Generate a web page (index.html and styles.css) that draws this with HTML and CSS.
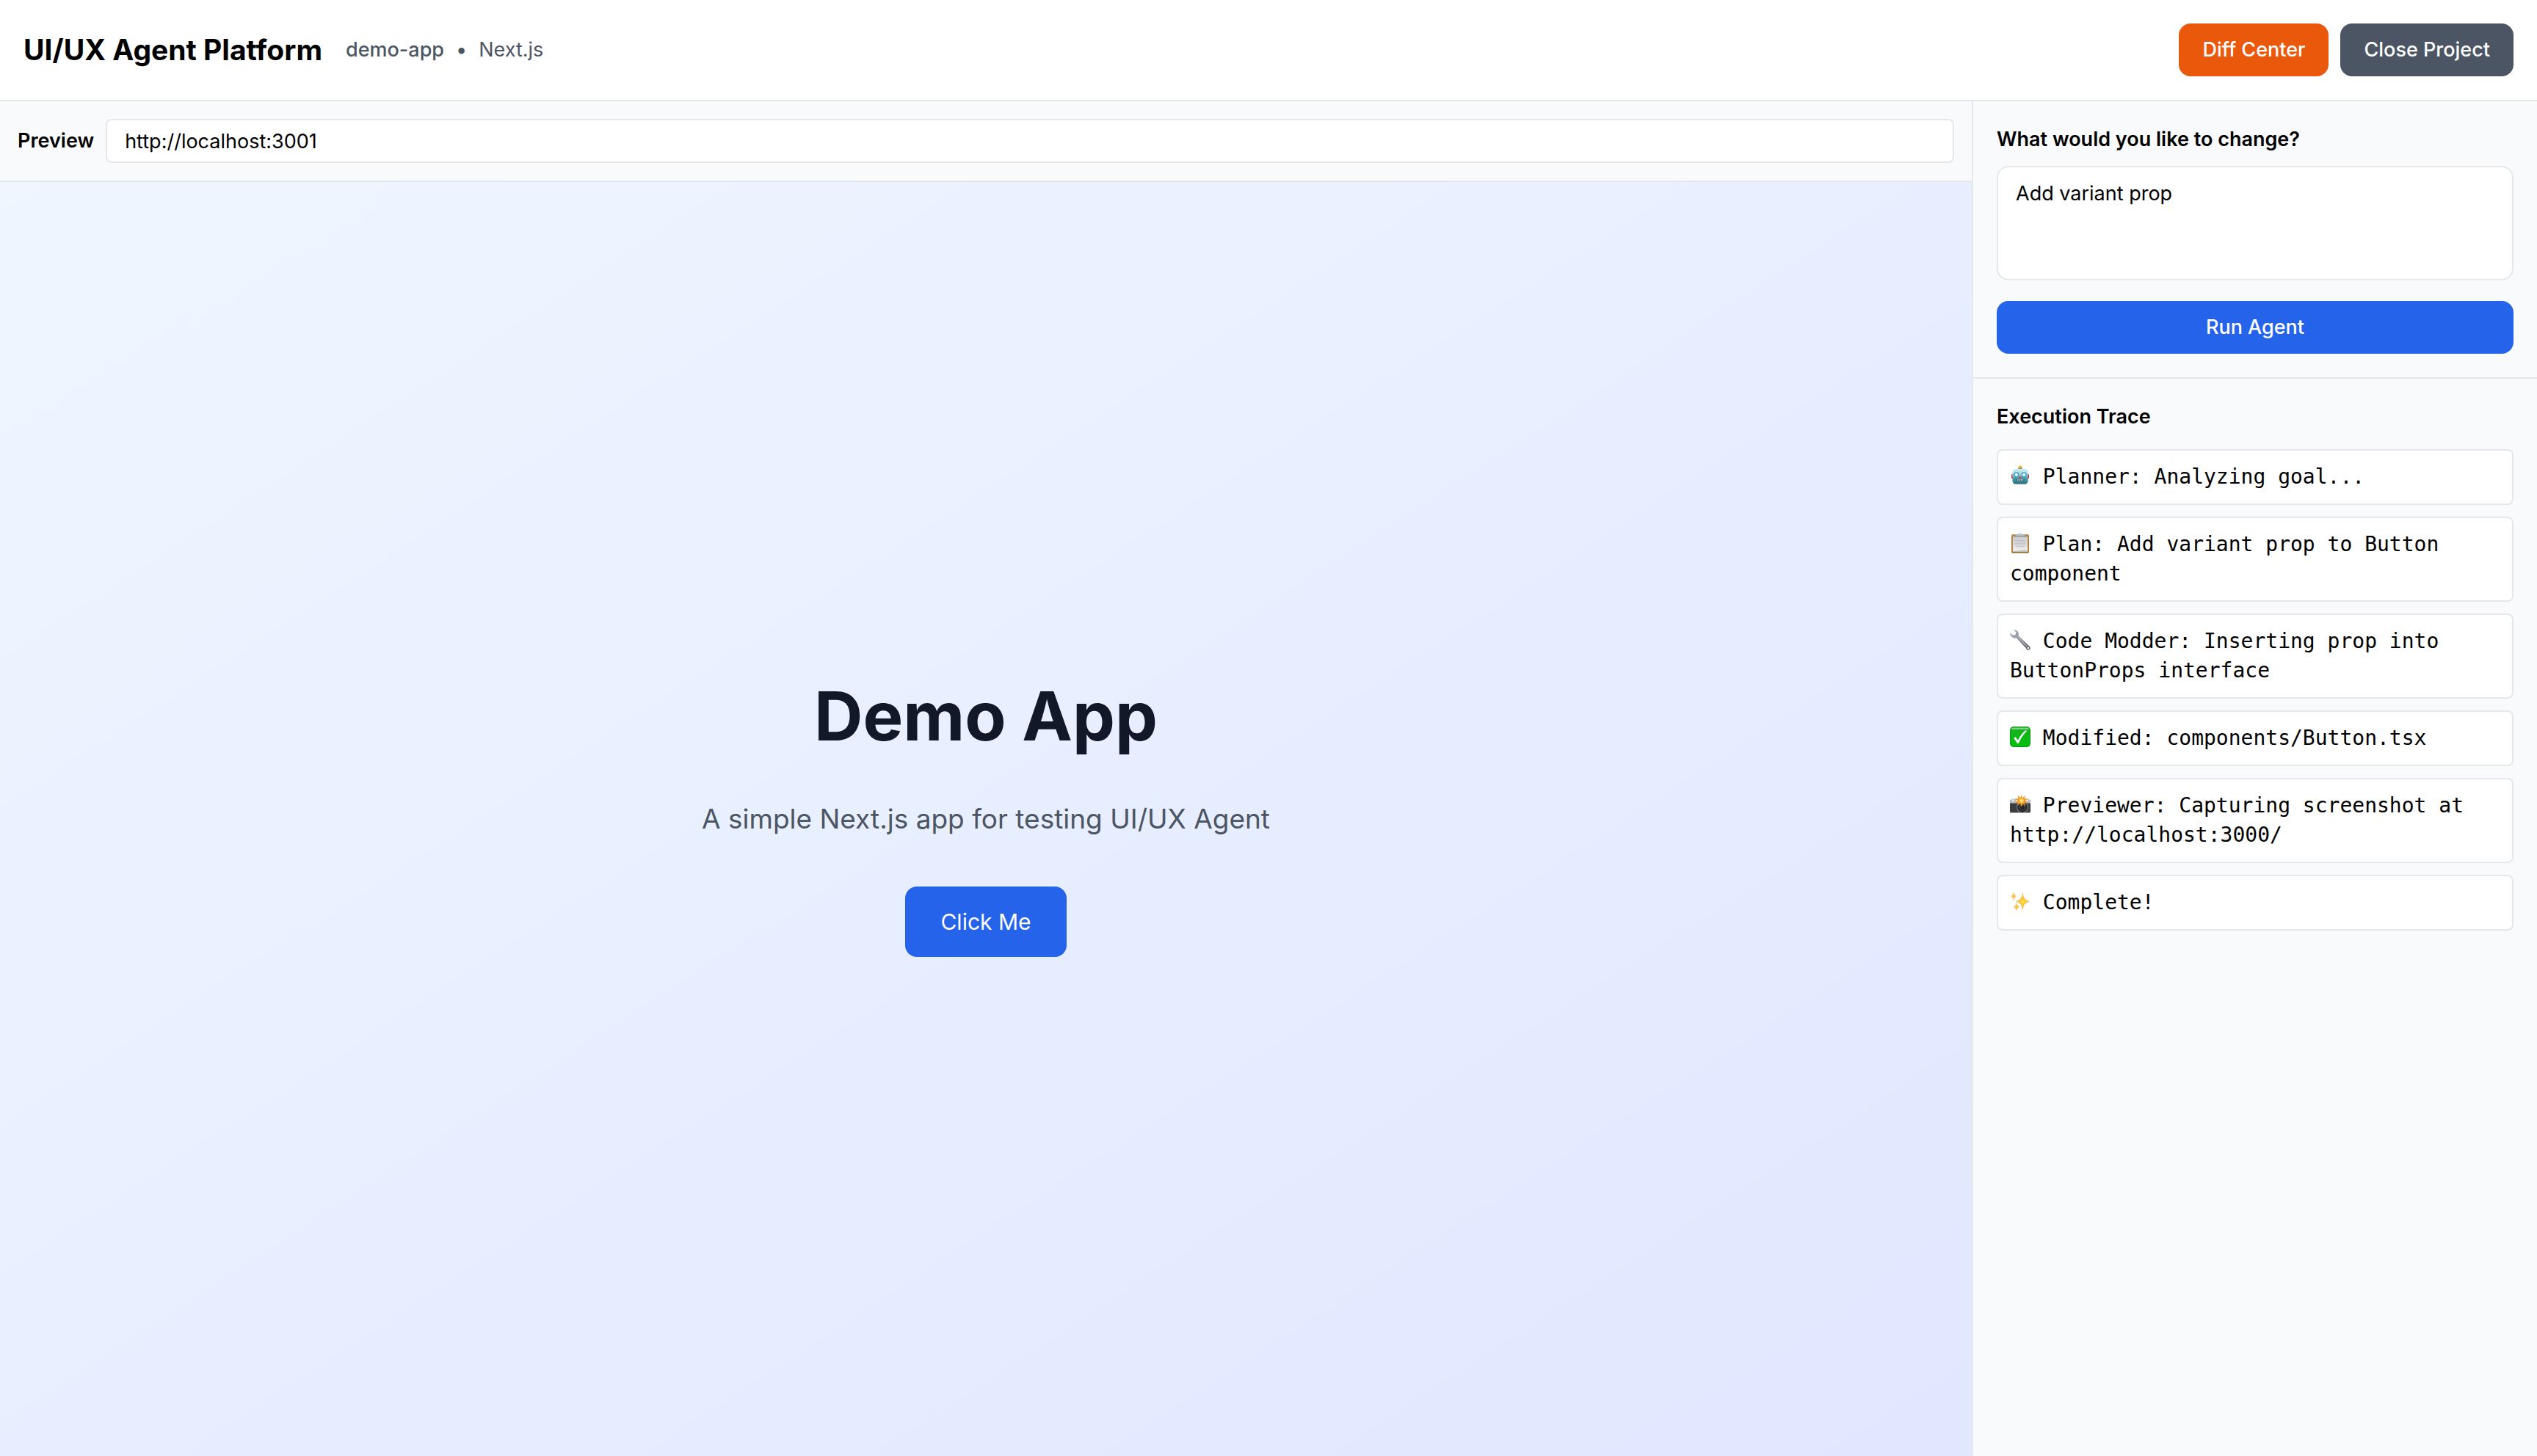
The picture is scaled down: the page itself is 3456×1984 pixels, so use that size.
FILE: index.html
```html
<!DOCTYPE html>
<html lang="en">
<head>
<meta charset="utf-8">
<meta name="viewport" content="width=device-width, initial-scale=1">
<title>UI/UX Agent Platform</title>
<link rel="stylesheet" href="styles.css">
</head>
<body>
<header class="topbar">
  <div class="topbar-info">
    <h1 class="topbar-title">UI/UX Agent Platform</h1>
    <p class="project"><span class="project-name">demo-app</span><span>•</span><span>Next.js</span></p>
  </div>
  <div class="topbar-actions">
    <button class="btn btn-orange" type="button">Diff Center</button>
    <button class="btn btn-gray" type="button">Close Project</button>
  </div>
</header>
<div class="workspace">
  <main class="preview">
    <div class="preview-bar">
      <label class="preview-label" for="url">Preview</label>
      <input class="url" id="url" type="text" value="http://localhost:3001">
    </div>
    <section class="stage">
      <h2 class="stage-title">Demo App</h2>
      <p class="stage-text">A simple Next.js app for testing UI/UX Agent</p>
      <button class="btn-stage" type="button">Click Me</button>
    </section>
  </main>
  <aside class="panel">
    <form class="goal">
      <label class="goal-label" for="goal">What would you like to change?</label>
      <textarea class="goal-text" id="goal" rows="3">Add variant prop</textarea>
      <button class="btn btn-blue" type="button">Run Agent</button>
    </form>
    <section class="trace">
      <h2 class="trace-title">Execution Trace</h2>
      <ul class="trace-list">
        <li class="trace-item"><svg class="emoji" viewBox="0 0 28 28" aria-hidden="true">
          <defs><linearGradient id="robot" x1="0" y1="0" x2="0" y2="1"><stop offset="0" stop-color="#d3f0f2"/><stop offset=".45" stop-color="#8ccbd3"/><stop offset=".6" stop-color="#4a9eac"/><stop offset="1" stop-color="#2b6f7d"/></linearGradient></defs>
          <rect x="2" y="12" width="3" height="6" rx="1" fill="#d8343a"/><rect x="23" y="12" width="3" height="6" rx="1" fill="#d8343a"/>
          <rect x="11.5" y="2.6" width="5" height="3.4" rx="1" fill="#7a5a9a"/><circle cx="14" cy="2.2" r="2" fill="#f6b21b"/>
          <path d="M8 4.8h12q4.2.6 4.6 6v10q-.4 5-4.6 5H8q-4.2 0-4.6-5v-10q.4-5.400 4.600-6z" fill="url(#robot)"/>
          <circle cx="8.8" cy="13" r="3.4" fill="#2497c6"/><circle cx="19.2" cy="13" r="3.4" fill="#2497c6"/>
          <circle cx="8.8" cy="13" r="2.2" fill="#e9fbff"/><circle cx="19.2" cy="13" r="2.2" fill="#e9fbff"/>
          <path d="M14 13.4l1.9 4.2h-3.8z" fill="#e5473c"/>
          <rect x="8.8" y="18.8" width="10.4" height="2.6" rx=".8" fill="#2a4c57"/><path d="M10 20.1h1.4M12.3 20.1h1.4M14.6 20.1h1.4M16.9 20.1h1.4" stroke="#fff" stroke-width="1.5"/>
        </svg> Planner: Analyzing goal...</li>
        <li class="trace-item"><svg class="emoji" viewBox="0 0 28 28" aria-hidden="true">
          <defs><linearGradient id="sheet" x1="0" y1="0" x2="0" y2="1"><stop offset="0" stop-color="#cbcbcd"/><stop offset="1" stop-color="#f0f0f2"/></linearGradient></defs>
          <rect x="2" y="2.3" width="24" height="25" rx="1.5" fill="#b58443"/><path d="M2.5 27h23" stroke="#83571f"/>
          <path d="M4 4.5h20v21H4z" fill="url(#sheet)"/><path d="M4 25.500h20l-3-2z" fill="#b9b9bb"/>
          <path d="M6.500 8h4M6.500 10.500h14M6.500 12.500h15M6.500 14.500h14M6.500 16.500h15M9 18.500h11" stroke="#c0c0c2"/>
          <path d="M8 5V3.200q0-1 1.500-1h2.300q.4-2 2.200-2t2.200 2h2.300q1.500 0 1.500 1V5z" fill="#b4bcc4"/><circle cx="14" cy="1.900" r=".7" fill="#fff"/><path d="M5 5h18" stroke="#7e8388"/>
        </svg> Plan: Add variant prop to Button component</li>
        <li class="trace-item"><svg class="emoji" viewBox="0 0 28 28" aria-hidden="true">
          <defs><linearGradient id="steel" x1="0" y1="0" x2="1" y2="1"><stop offset="0" stop-color="#a9bac6"/><stop offset=".5" stop-color="#8c8f98"/><stop offset="1" stop-color="#6b5a5f"/></linearGradient></defs>
          <path d="M4.800.2Q9.800-.4 11.600 4q.6 2 0 4.300L25.700 21.800q2.600 1.700 2 4-1 2.600-3.700 1.900-1.700-.7-2.200-2.500L8.800 11.300Q4 12.300 1.400 8.700 0 6.500.3 3.900L4 7.400l3.600-.5L8.300 3.600z" fill="url(#steel)"/>
          <path d="M10.500 9.500l12.500 13" stroke="#c9ced5" stroke-width="1"/><circle cx="24.900" cy="25" r="1.300" fill="#fff"/>
        </svg> Code Modder: Inserting prop into ButtonProps interface</li>
        <li class="trace-item"><svg class="emoji" viewBox="0 0 28 28" aria-hidden="true">
          <defs><linearGradient id="green" x1="0" y1="0" x2="0" y2="1"><stop offset="0" stop-color="#2fae35"/><stop offset=".2" stop-color="#12b41b"/><stop offset="1" stop-color="#06bf0c"/></linearGradient></defs>
          <rect width="28" height="28" rx="5" fill="#0b961a"/><rect x=".8" y=".8" width="26.400" height="26.200" rx="4.400" fill="url(#green)"/>
          <path d="M5 1.800h18q3 0 3 2H2q0-2 3-2z" fill="#83d588"/>
          <path d="M5.200 15.600l2.600-1.300 3 4.500Q15 10.200 20.800 5.400h2.600Q16 12.800 11.900 22.800H9.800z" fill="#fff"/>
        </svg> Modified: components/Button.tsx</li>
        <li class="trace-item"><svg class="emoji" viewBox="0 0 28 28" aria-hidden="true">
          <rect y="8" width="28" height="17.500" rx="1.500" fill="#3c3c3e"/><path d="M1 8l2-1.500h22L27 8q1 .4 1 2v2.500H0V10q0-1.600 1-2z" fill="#b8babc"/>
          <path d="M3 8.500h3M8 8.500h3M21 8.500h4" stroke="#f3f3f3" stroke-width="2"/><path d="M0 25.300h28" stroke="#a3a4a6"/>
          <circle cx="17" cy="17.700" r="8" fill="#77797b"/><circle cx="17" cy="17.700" r="6.800" fill="#252528"/><circle cx="17" cy="17.700" r="4.300" fill="#55575d"/><circle cx="17" cy="18.300" r="3" fill="#232329"/>
          <path d="M15.700.8l1.200 4.400L20.800 2l-1.200 4.500 5-.4-4 2.800 4.600 2.800-5.200-.3 1.500 4.500-4-3-1.800 4.800-1.500-4.800-4.200 3.200 1.700-4.600-5 .4 4.300-3-4.300-2.300 4.900-.1L10.400 2l4 3z" fill="#f69522"/>
          <circle cx="15.800" cy="9" r="3.200" fill="#ffc83c"/><circle cx="15.800" cy="9" r="1.600" fill="#fff2b0"/>
        </svg> Previewer: Capturing screenshot at http://localhost:3000/</li>
        <li class="trace-item"><svg class="emoji" viewBox="0 0 28 28" aria-hidden="true">
          <g fill="#fbc531" stroke="#f6b98a" stroke-width=".6"><path d="M17.300 2.700q1 10.300 9.500 11.600-8.500 1.300-9.500 11.600-1-10.300-9.300-11.600 8.300-1.300 9.300-11.600z"/><path d="M5 2q.6 4.600 3.500 5.300Q5.600 8 5 12.700 4.400 8 1.500 7.300 4.400 6.600 5 2z"/><path d="M9 16.500q.6 4.500 4 5.200-3.400.7-4 5.100-.6-4.400-4-5.100 3.400-.7 4-5.200z"/></g>
          <circle cx="17.300" cy="14.300" r="2.600" fill="#fde047"/>
        </svg> Complete!</li>
      </ul>
    </section>
  </aside>
</div>
</body>
</html>
```
FILE: styles.css
```css
*,
*::before,
*::after {
  box-sizing: border-box;
}

body {
  display: flex;
  flex-direction: column;
  min-height: 100vh;
  margin: 0;
  background: #fff;
  color: #000;
  font-family: Inter, "Liberation Sans", sans-serif;
  font-size: 27px;
  line-height: 40px;
}

h1,
h2,
p,
ul {
  margin: 0;
  padding: 0;
}

button,
input,
textarea {
  margin: 0;
  color: inherit;
  font: inherit;
}

/* Top bar */
.topbar {
  display: flex;
  align-items: center;
  justify-content: space-between;
  padding: 32px;
  border-bottom: 2px solid #e5e7eb;
}

.topbar-info {
  display: flex;
  align-items: center;
  gap: 32px;
}

.topbar-title {
  font-size: 39px;
  font-weight: 700;
}

.project {
  display: flex;
  gap: 16px;
  color: #4b5563;
}

.project-name {
  font-weight: 500;
}

.topbar-actions {
  display: flex;
  gap: 16px;
}

.btn {
  padding: 16px 32px;
  border: 0;
  border-radius: 16px;
  color: #fff;
  font-weight: 500;
}

.btn-orange {
  background: #ea580c;
}

.btn-gray {
  background: #4b5563;
}

.btn-blue {
  background: #2563eb;
}

.workspace {
  display: flex;
  flex: 1;
}

/* Preview side */
.preview {
  display: flex;
  flex: 1;
  flex-direction: column;
  min-width: 0;
  border-right: 2px solid #e5e7eb;
}

.preview-bar {
  display: flex;
  align-items: center;
  gap: 16px;
  padding: 24px;
  border-bottom: 2px solid #e5e7eb;
  background: #f9fafb;
}

.preview-label,
.goal-label,
.trace-title {
  font-size: 27px;
  font-weight: 600;
}

.url {
  flex: 1;
  min-width: 0;
  height: 60px;
  padding: 8px 24px;
  border: 2px solid #e5e7eb;
  border-radius: 8px;
  background: #fff;
}

.stage {
  display: flex;
  flex: 1;
  flex-direction: column;
  align-items: center;
  justify-content: center;
  background: linear-gradient(to bottom right, #eff6ff, #e0e7ff);
}

.stage-title {
  margin-bottom: 64px;
  color: #111827;
  font-size: 92px;
  font-weight: 700;
  line-height: 96px;
}

.stage-text {
  margin-bottom: 64px;
  color: #4b5563;
  font-size: 37px;
  line-height: 56px;
}

.btn-stage {
  padding: 24px 48px;
  border: 0;
  border-radius: 16px;
  background: #2563eb;
  color: #fff;
  font-size: 30px;
  line-height: 48px;
}

/* Agent side panel */
.panel {
  flex: none;
  width: 768px;
  background: #f9fafb;
}

.goal {
  display: flex;
  flex-direction: column;
  padding: 32px;
  border-bottom: 2px solid #e5e7eb;
}

.goal-text {
  margin: 16px 0 28px;
  padding: 16px 24px;
  border: 2px solid #e5e7eb;
  border-radius: 16px;
  background: #fff;
  resize: none;
}

.trace {
  padding: 32px;
}

.trace-title {
  margin-bottom: 24px;
}

.trace-list {
  display: flex;
  flex-direction: column;
  gap: 16px;
  list-style: none;
}

.trace-item {
  padding: 16px;
  border: 2px solid #e5e7eb;
  border-radius: 8px;
  background: #fff;
  font-family: "DejaVu Sans Mono", monospace;
  font-size: 28px;
}

.emoji {
  width: 28px;
  height: 28px;
  vertical-align: -3px;
}
```
